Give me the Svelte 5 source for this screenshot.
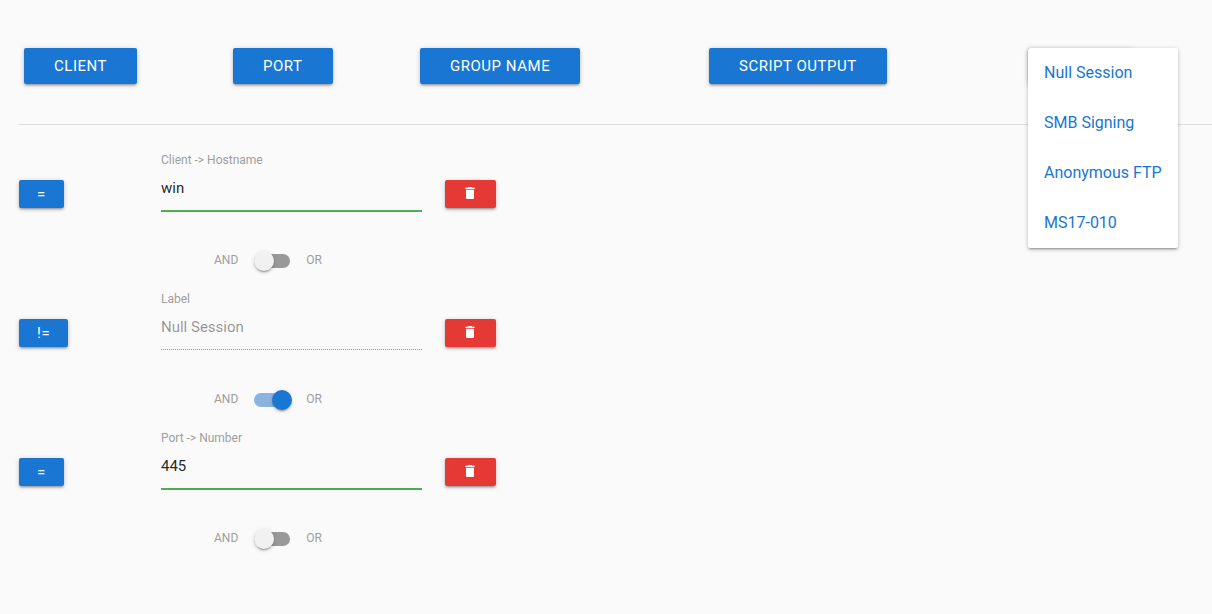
<script>
  const fields = ['Client', 'Port', 'Group Name', 'Script Output'];
  const presets = ['Null Session', 'SMB Signing', 'Anonymous FTP', 'MS17-010'];

  let rules = $state([
    { id: 1, op: '=', label: 'Client -> Hostname', value: 'win', locked: false, or: false },
    { id: 2, op: '!=', label: 'Label', value: 'Null Session', locked: true, or: true },
    { id: 3, op: '=', label: 'Port -> Number', value: '445', locked: false, or: false }
  ]);

  function toggleOp(rule) {
    rule.op = rule.op === '=' ? '!=' : '=';
  }

  function remove(id) {
    rules = rules.filter((r) => r.id !== id);
  }
</script>

<main>
  <div class="toolbar">
    {#each fields as field}
      <div class="cell"><button type="button" class="btn">{field}</button></div>
    {/each}
    <div class="cell">
      <div class="dropdown">
        <button type="button" class="btn trigger" aria-label="Label" aria-expanded="true"></button>
        <ul class="menu">
          {#each presets as preset}
            <li><a href="#label">{preset}</a></li>
          {/each}
        </ul>
      </div>
    </div>
  </div>

  <div class="rules">
    {#each rules as rule (rule.id)}
      <div class="rule">
        <button type="button" class="btn small" onclick={() => toggleOp(rule)}>{rule.op}</button>
        <div class="field">
          <label for="value-{rule.id}">{rule.label}</label>
          <input id="value-{rule.id}" type="text" bind:value={rule.value} disabled={rule.locked} />
        </div>
        <button type="button" class="btn small delete" aria-label="Delete" onclick={() => remove(rule.id)}>
          <svg viewBox="0 0 24 24" width="16" height="16" aria-hidden="true">
            <path d="M6 19c0 1.1.9 2 2 2h8c1.1 0 2-.9 2-2V7H6v12zM19 4h-3.5l-1-1h-5l-1 1H5v2h14V4z" />
          </svg>
        </button>
        <label class="switch">
          <span class="side">AND</span>
          <span class="lever">
            <input type="checkbox" bind:checked={rule.or} />
          </span>
          <span class="side">OR</span>
        </label>
      </div>
    {/each}
  </div>
</main>

<style>
  :global(body) {
    margin: 0;
    background: #fafafa;
  }

  main {
    padding: 48px 0 32px 19px;
    font-family: Roboto, sans-serif;
    font-size: 15px;
    color: rgba(0, 0, 0, 0.87);
  }

  .toolbar {
    display: grid;
    grid-template-columns: 209fr 187fr 289fr 319fr 189fr;
    padding-bottom: 40px;
    border-bottom: 1px solid #dedede;
  }

  .cell {
    padding-left: 5px;
  }

  .btn {
    display: block;
    height: 36px;
    padding: 0 30px;
    border: 0;
    border-radius: 2px;
    background: #1976d2;
    color: #fff;
    font: 400 15px/36px Roboto, sans-serif;
    letter-spacing: 0.035em;
    text-transform: uppercase;
    white-space: nowrap;
    cursor: pointer;
    box-shadow:
      0 2px 2px 0 rgba(0, 0, 0, 0.14),
      0 3px 1px -2px rgba(0, 0, 0, 0.12),
      0 1px 5px 0 rgba(0, 0, 0, 0.2);
  }

  .dropdown {
    position: relative;
    width: max-content;
  }

  .btn.trigger {
    min-width: 105px;
  }

  .menu {
    position: absolute;
    top: 0;
    left: 0;
    z-index: 1;
    margin: 0;
    padding: 0;
    list-style: none;
    background: #fff;
    border-radius: 2px;
    box-shadow:
      0 2px 2px 0 rgba(0, 0, 0, 0.14),
      0 3px 1px -2px rgba(0, 0, 0, 0.12),
      0 1px 5px 0 rgba(0, 0, 0, 0.2);
  }

  .menu a {
    display: block;
    padding: 14px 16px;
    color: #1976d2;
    font-size: 16px;
    line-height: 22px;
    text-decoration: none;
    white-space: nowrap;
  }

  .rules {
    padding-top: 29px;
  }

  .rule {
    display: grid;
    grid-template-columns: 142fr 284fr 767fr;
    justify-items: start;
    padding-bottom: 20px;
  }

  .btn.small {
    height: 28px;
    margin-top: 26px;
    padding: 0 18px;
    line-height: 28px;
  }

  .btn.delete {
    padding: 0 18px 0 17px;
    background: #e53935;
  }

  .delete svg {
    display: block;
    margin-bottom: 2px;
    fill: #fff;
  }

  .field {
    justify-self: stretch;
    margin-right: 23px;
  }

  .field label {
    display: block;
    font-size: 12px;
    line-height: 12px;
    color: #9e9e9e;
  }

  .field input {
    display: block;
    box-sizing: border-box;
    width: 100%;
    height: 45px;
    padding: 0;
    border: 0;
    border-bottom: 1px solid #4caf50;
    border-radius: 0;
    outline: none;
    background: transparent;
    box-shadow: 0 1px 0 0 #4caf50;
    color: rgba(0, 0, 0, 0.87);
    font: 400 15px Roboto, sans-serif;
  }

  .field input:disabled {
    border-bottom: 1px dotted rgba(0, 0, 0, 0.42);
    box-shadow: none;
    color: rgba(0, 0, 0, 0.42);
  }

  .switch {
    grid-column: 2;
    display: flex;
    align-items: center;
    gap: 16px;
    height: 24px;
    margin: 38px 0 0 53px;
    font-size: 12px;
    line-height: 12px;
    color: #9e9e9e;
    cursor: pointer;
  }

  .side {
    padding-bottom: 2px;
  }

  .lever {
    display: flex;
    align-items: center;
    width: 36px;
    height: 14px;
    border-radius: 7px;
    background: #999;
  }

  .lever:has(input:checked) {
    background: #8cb3df;
  }

  .lever input {
    flex: none;
    appearance: none;
    width: 20px;
    height: 20px;
    margin: 0;
    border-radius: 50%;
    background: #f1f1f1;
    cursor: pointer;
    box-shadow:
      0 3px 1px -2px rgba(0, 0, 0, 0.2),
      0 2px 2px 0 rgba(0, 0, 0, 0.14),
      0 1px 5px 0 rgba(0, 0, 0, 0.12);
  }

  .lever input:checked {
    margin-left: 18px;
    background: #1976d2;
  }
</style>
